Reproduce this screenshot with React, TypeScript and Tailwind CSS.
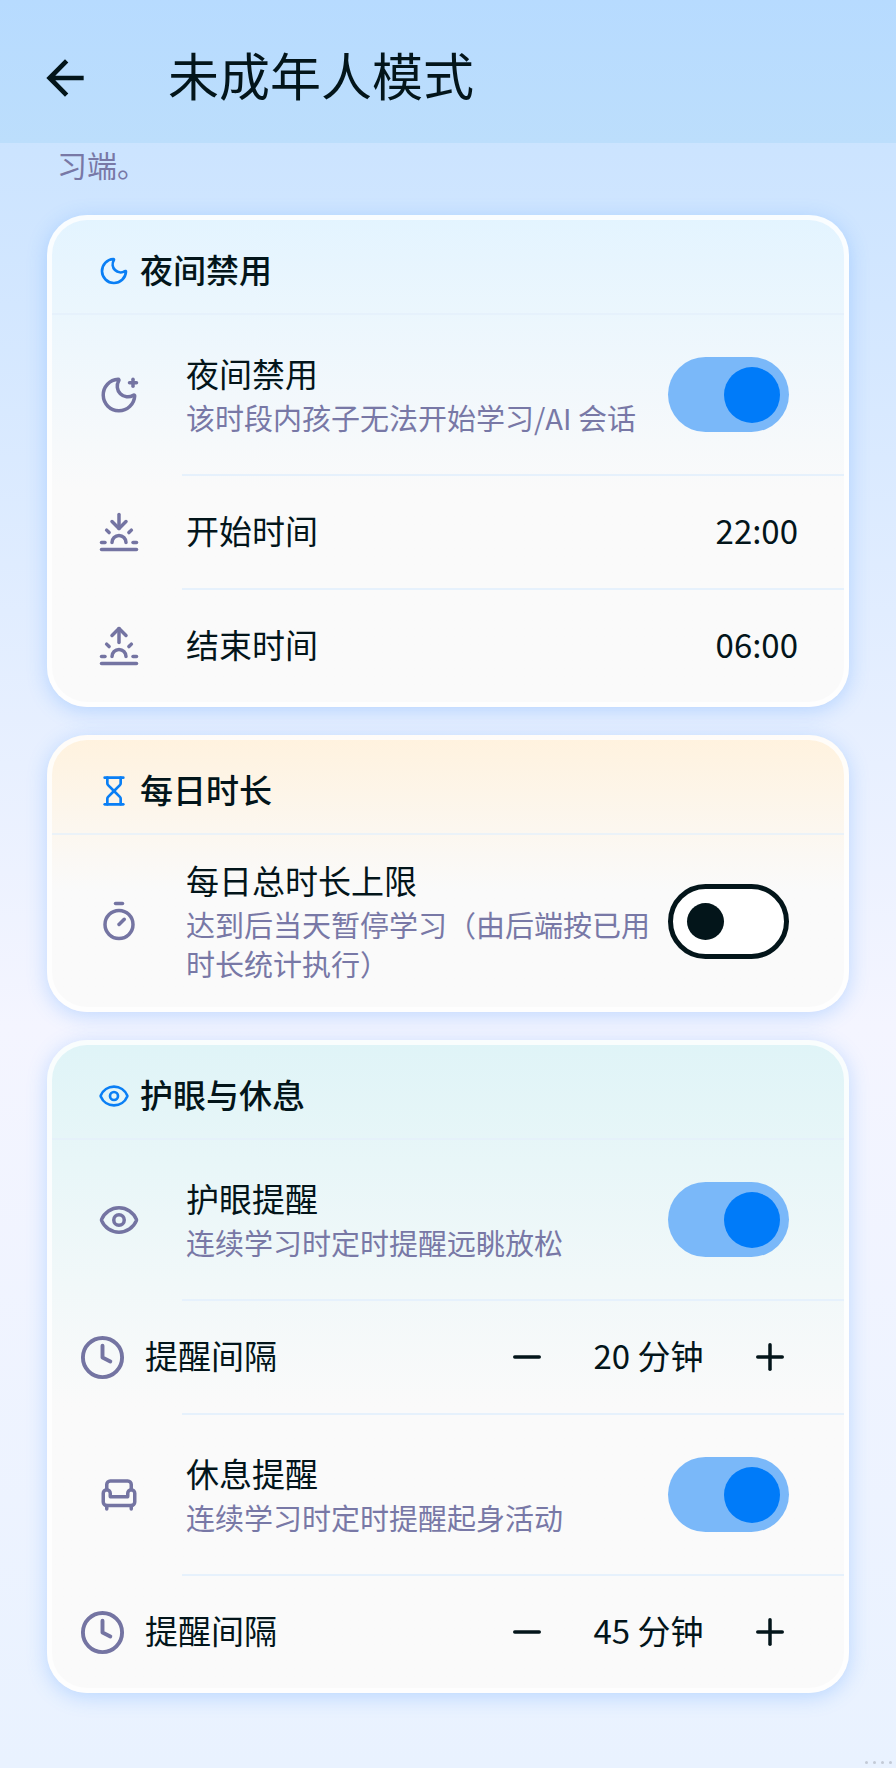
import { useId, useState } from 'react';
import type { ReactNode } from 'react';
import {
  Armchair,
  Clock4,
  Eye,
  Hourglass,
  Minus,
  Moon,
  MoonStar,
  Plus,
  Sunrise,
  Sunset,
  Timer,
} from 'lucide-react';

const rowIcon = 'w-[42px] h-[42px] shrink-0 text-[#7474a2]';
const headIcon = 'w-8 h-8 shrink-0 text-[#0a7ff5]';

type CardProps = {
  tint: string;
  icon: ReactNode;
  title: string;
  children: ReactNode;
};

const Card = ({ tint, icon, title, children }: CardProps) => (
  <section
    className={`rounded-[40px] border-5 border-white/80 bg-origin-border bg-linear-to-b to-[#fafafa] to-56% shadow-[0_4px_20px_rgba(60,145,255,0.28)] ${tint}`}
  >
    <div className="flex items-center gap-[10px] h-[95px] px-[46px] pt-2 border-b-2 border-[#e4f0fb]/70">
      {icon}
      <h2 className="pb-1 text-[33px] leading-[46px] font-medium">{title}</h2>
    </div>
    {children}
  </section>
);

const Divider = () => <div className="h-[2px] ml-[130px] bg-[#e6f1fc]" />;

type SwitchRowProps = {
  icon: ReactNode;
  title: string;
  description: string;
  initial: boolean;
};

const SwitchRow = ({ icon, title, description, initial }: SwitchRowProps) => {
  const id = useId();
  const [on, setOn] = useState(initial);

  return (
    <div className="flex items-center pl-[46px] pr-[55px] py-[24px] min-h-[159px]">
      {icon}
      <div className="flex-1 ml-[46px]">
        <label htmlFor={id} className="block pb-1 text-[33px] leading-[42px]">
          {title}
        </label>
        <p className="text-[29px] leading-[39px] text-[#7878a6]">{description}</p>
      </div>
      <input
        id={id}
        type="checkbox"
        role="switch"
        checked={on}
        onChange={() => setOn(!on)}
        className="appearance-none flex items-center shrink-0 w-[121px] h-[75px] rounded-full cursor-pointer border-5 border-[#03151a] bg-white px-[14px] before:block before:w-[37px] before:h-[37px] before:rounded-full before:bg-[#03151a] checked:justify-end checked:border-0 checked:bg-[#7ab8f9] checked:px-[9px] checked:before:w-[56px] checked:before:h-[56px] checked:before:bg-[#007bf9]"
      />
    </div>
  );
};

type TimeRowProps = {
  icon: ReactNode;
  title: string;
  value: string;
};

const TimeRow = ({ icon, title, value }: TimeRowProps) => (
  <button
    type="button"
    className="flex items-center w-full h-[112px] px-[46px] text-left text-[33px] leading-[46px] cursor-pointer"
  >
    {icon}
    <span className="flex-1 ml-[46px] pb-1">{title}</span>
    <span className="pb-1">{value}</span>
  </button>
);

type StepperRowProps = {
  title: string;
  initial: number;
};

const StepperRow = ({ title, initial }: StepperRowProps) => {
  const [minutes, setMinutes] = useState(initial);

  return (
    <div className="flex items-center h-[112px] pl-[27px] pr-8 text-[33px] leading-[46px]">
      <Clock4 className="w-[47px] h-[47px] shrink-0 text-[#7474a2]" />
      <span className="flex-1 ml-[19px] pb-1">{title}</span>
      <button
        type="button"
        aria-label="减少"
        onClick={() => setMinutes(Math.max(5, minutes - 5))}
        className="flex items-center justify-center w-[84px] h-[84px] cursor-pointer"
      >
        <Minus className="w-[42px] h-[42px]" />
      </button>
      <span className="w-[159px] pb-1 text-center">{minutes} 分钟</span>
      <button
        type="button"
        aria-label="增加"
        onClick={() => setMinutes(minutes + 5)}
        className="flex items-center justify-center w-[84px] h-[84px] cursor-pointer"
      >
        <Plus className="w-[42px] h-[42px]" />
      </button>
    </div>
  );
};

const App = () => {
  return (
    <div className="relative min-h-screen pb-[74px] bg-linear-to-b from-[#c5e1ff] via-[#f4f5ff] via-58% to-[#e9f2ff] text-[#03151a] font-['Noto_Sans_CJK_SC',sans-serif]">
      <header className="flex items-center h-[143px] pl-[37px] pt-3 bg-linear-to-b from-[#b7dbff] to-[#bcdefc]">
        <button type="button" aria-label="返回" className="cursor-pointer">
          <svg viewBox="0 0 24 24" className="w-[56px] h-[56px]" fill="currentColor" aria-hidden="true">
            <path d="M20 11H7.83l5.59-5.59L12 4l-8 8 8 8 1.41-1.41L7.83 13H20v-2z" />
          </svg>
        </button>
        <h1 className="ml-[75px] pb-2 text-[51px] leading-[64px]">未成年人模式</h1>
      </header>

      <main className="px-[47px]">
        <p className="px-[10px] mb-[30px] text-[30px] leading-[42px] text-[#7878a6]">习端。</p>

        <div className="flex flex-col gap-7">
          <Card tint="from-[#e3f4ff]" icon={<Moon className={headIcon} />} title="夜间禁用">
            <SwitchRow
              icon={<MoonStar className={rowIcon} />}
              title="夜间禁用"
              description="该时段内孩子无法开始学习/AI 会话"
              initial={true}
            />
            <Divider />
            <TimeRow icon={<Sunset className={rowIcon} />} title="开始时间" value="22:00" />
            <Divider />
            <TimeRow icon={<Sunrise className={rowIcon} />} title="结束时间" value="06:00" />
          </Card>

          <Card tint="from-[#fff2de]" icon={<Hourglass className={headIcon} />} title="每日时长">
            <SwitchRow
              icon={<Timer className={rowIcon} />}
              title="每日总时长上限"
              description="达到后当天暂停学习（由后端按已用时长统计执行）"
              initial={false}
            />
          </Card>

          <Card tint="from-[#dff4f7]" icon={<Eye className={headIcon} />} title="护眼与休息">
            <SwitchRow
              icon={<Eye className={rowIcon} />}
              title="护眼提醒"
              description="连续学习时定时提醒远眺放松"
              initial={true}
            />
            <Divider />
            <StepperRow title="提醒间隔" initial={20} />
            <Divider />
            <SwitchRow
              icon={<Armchair className={rowIcon} />}
              title="休息提醒"
              description="连续学习时定时提醒起身活动"
              initial={true}
            />
            <Divider />
            <StepperRow title="提醒间隔" initial={45} />
          </Card>
        </div>
      </main>

      <div className="absolute right-1 bottom-1 flex gap-[5px]" aria-hidden="true">
        <i className="w-[3px] h-[3px] rounded-full bg-[#c3cad6]" />
        <i className="w-[3px] h-[3px] rounded-full bg-[#c3cad6]" />
        <i className="w-[3px] h-[3px] rounded-full bg-[#c3cad6]" />
        <i className="w-[3px] h-[3px] rounded-full bg-[#c3cad6]" />
      </div>
    </div>
  );
};

export default App;
